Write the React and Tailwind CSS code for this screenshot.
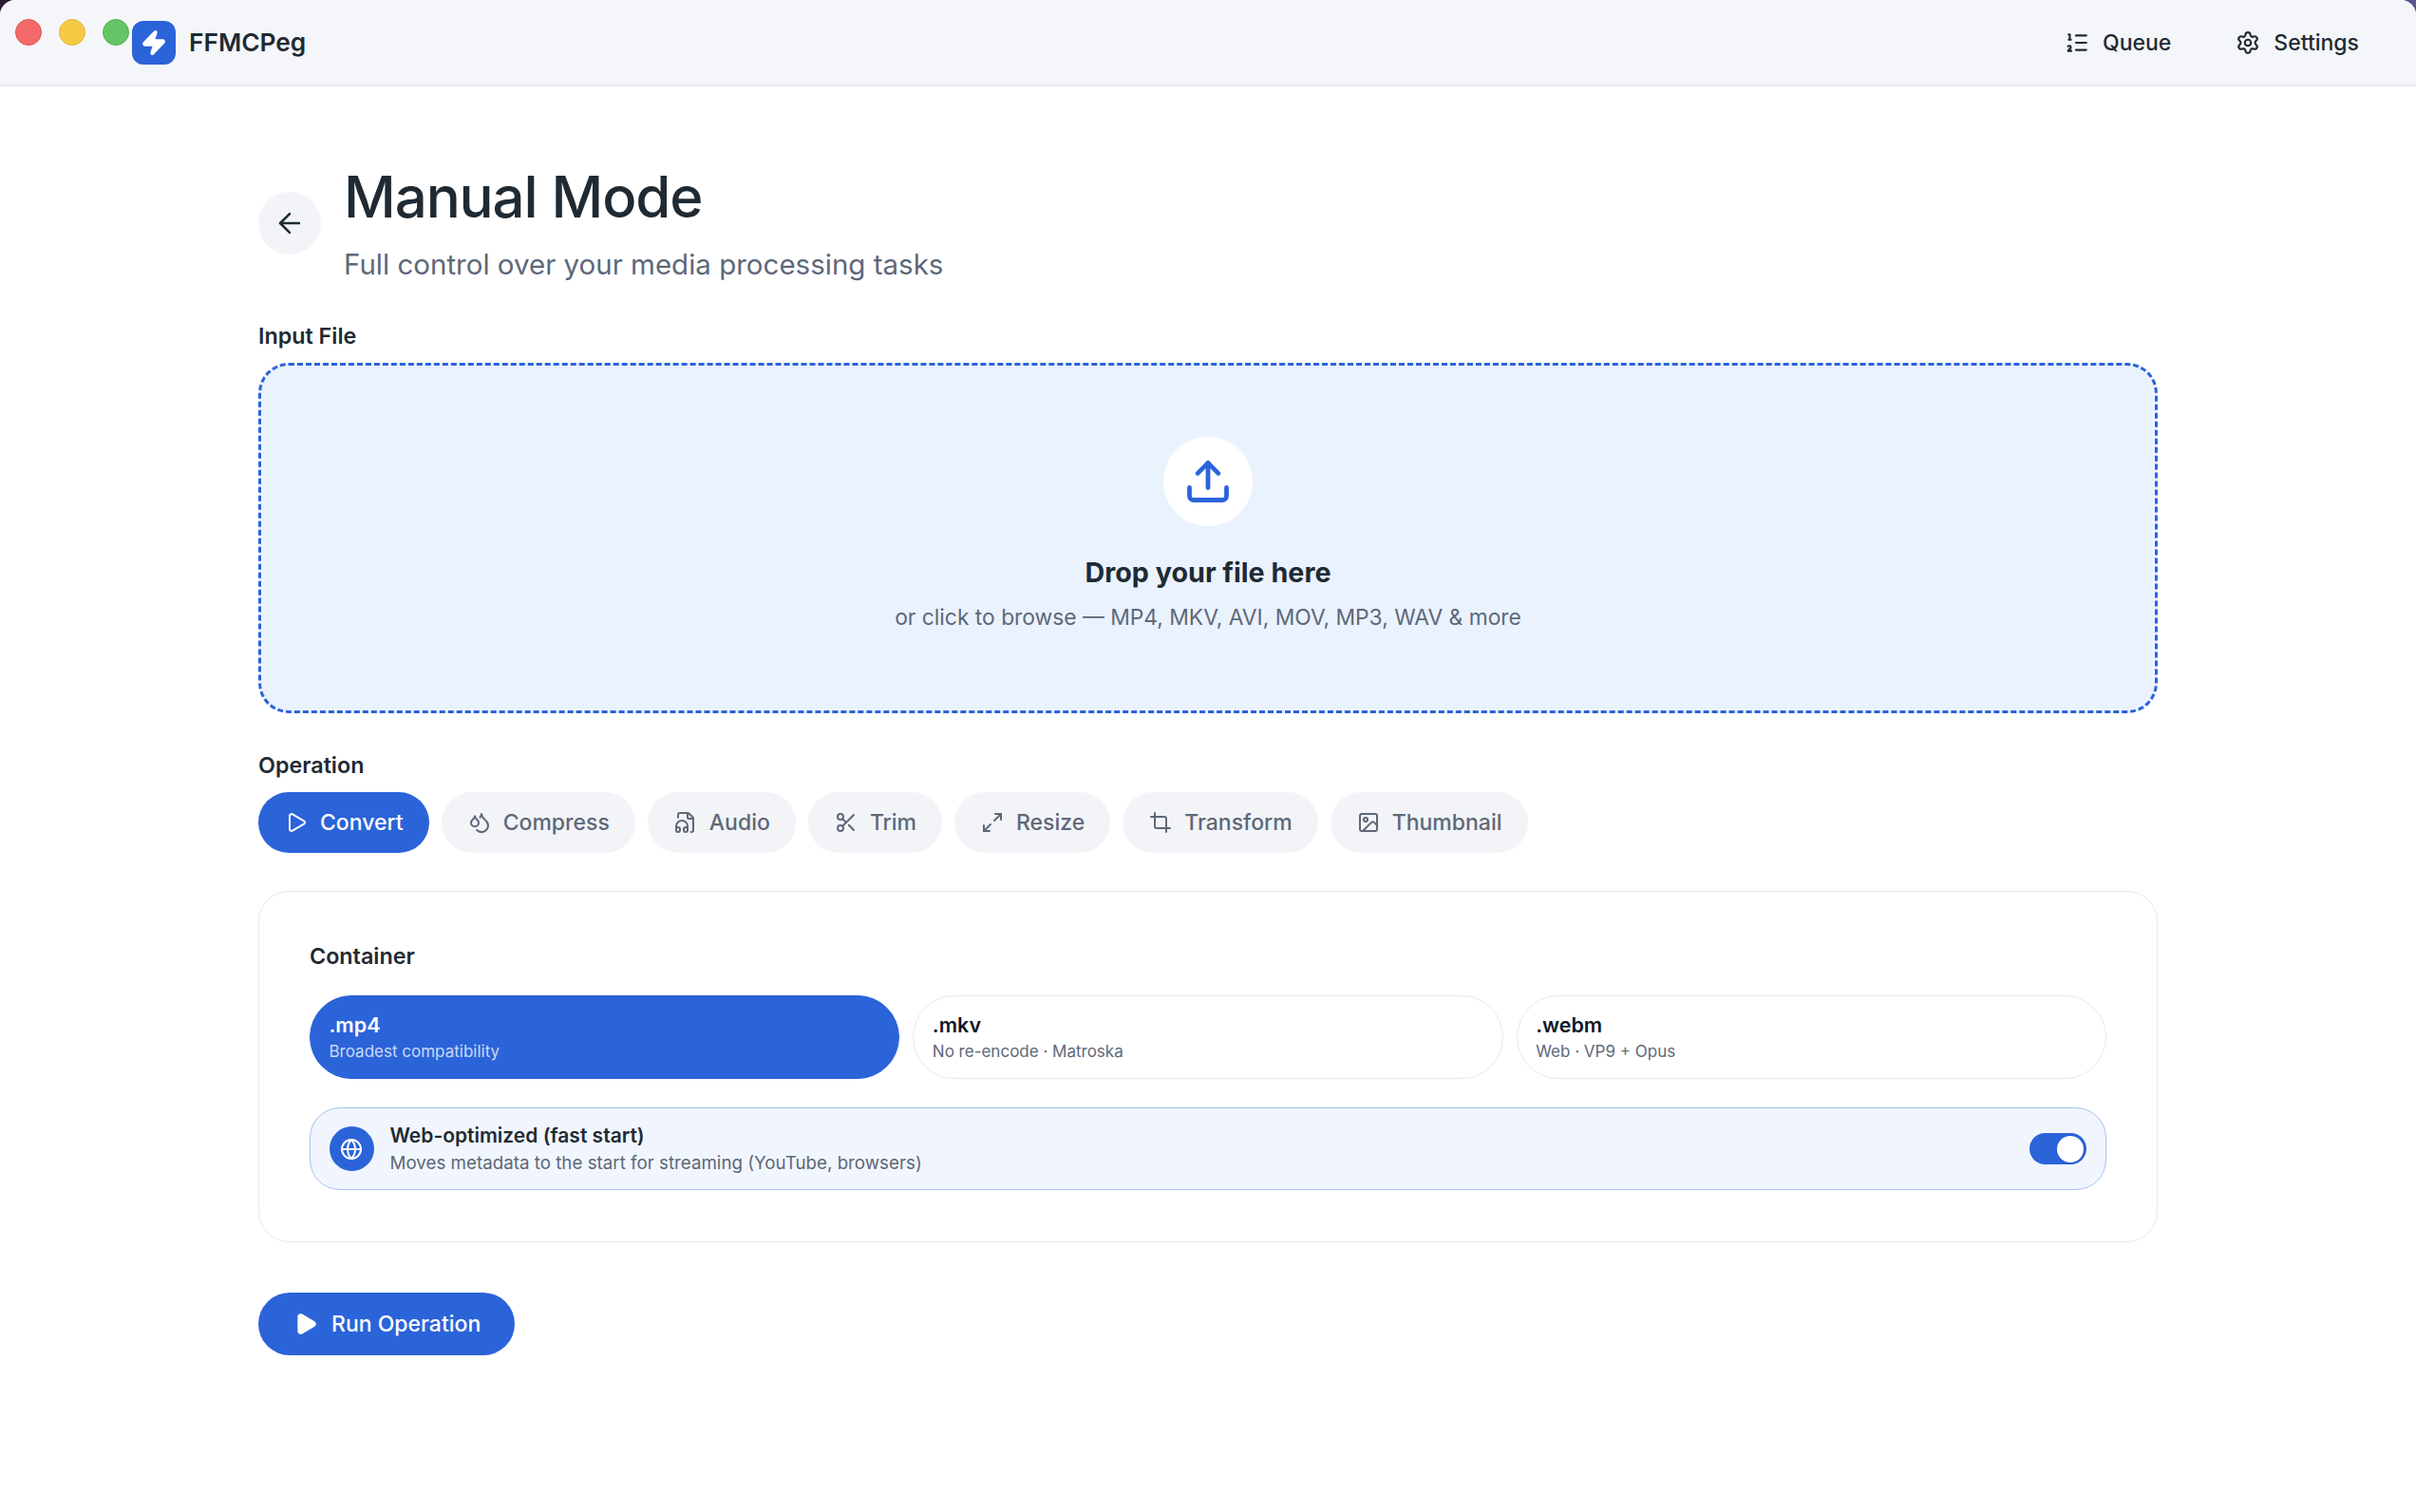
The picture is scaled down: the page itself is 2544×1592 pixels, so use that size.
import React from 'react';
import { ArrowLeft, Crop, Droplets, FileAudio, Globe, Image, ListOrdered, Maximize2, Play, Scissors, Settings, Upload, Zap } from 'lucide-react';

const operations = [
  { label: 'Convert', icon: Play, active: true },
  { label: 'Compress', icon: Droplets },
  { label: 'Audio', icon: FileAudio },
  { label: 'Trim', icon: Scissors },
  { label: 'Resize', icon: Maximize2 },
  { label: 'Transform', icon: Crop },
  { label: 'Thumbnail', icon: Image },
];

const containers = [
  { ext: '.mp4', note: 'Broadest compatibility', active: true },
  { ext: '.mkv', note: 'No re-encode · Matroska' },
  { ext: '.webm', note: 'Web · VP9 + Opus' },
];

const TopBar = () => {
  return (
    <header className="flex h-[91px] items-center justify-between border-b-2 border-[#e7e9ee] bg-[#f4f6fa] pl-[139px] pr-[60px]">
      <div className="flex items-center gap-[14px]">
        <div className="flex h-[46px] w-[46px] items-center justify-center rounded-[12px] bg-[#2b63d9]">
          <Zap size={28} strokeWidth={2.4} className="fill-white text-white" />
        </div>
        <span className="text-[26.3px] font-semibold text-[#1f2a33]">FFMCPeg</span>
      </div>
      <nav className="flex items-center gap-[68px] text-[23px] font-medium text-[#1f2a33]">
        <div className="flex items-center gap-[14px]">
          <ListOrdered size={26} strokeWidth={2} />
          <span className="pt-[2px]">Queue</span>
        </div>
        <div className="flex items-center gap-[14px]">
          <Settings size={26} strokeWidth={2} />
          <span className="pt-[2px]">Settings</span>
        </div>
      </nav>
    </header>
  );
};

const TrafficLights = () => {
  return (
    <div className="absolute left-[16px] top-[20px] flex gap-[18px]">
      <div className="h-[28px] w-[28px] rounded-full border border-[#e5504f] bg-[#f46a6a]"></div>
      <div className="h-[28px] w-[28px] rounded-full border border-[#e5b53a] bg-[#f6ca45]"></div>
      <div className="h-[28px] w-[28px] rounded-full border border-[#55b055] bg-[#65c466]"></div>
    </div>
  );
};

function App() {
  return (
    <div className="h-[1592px] w-[2544px] bg-gradient-to-r from-[#2a1c2e] to-[#5b5689] font-['Inter',sans-serif]">
      <div className="relative h-full w-full overflow-hidden rounded-t-[16px] bg-white">
        <TopBar />
        <TrafficLights />

        <main className="mx-auto w-[2000px] pt-[78px]">
          {/* Title */}
          <div className="flex items-start gap-[24px]">
            <button className="mt-[33px] flex h-[66px] w-[66px] items-center justify-center rounded-full bg-[#f2f4f8] text-[#1f2a33]">
              <ArrowLeft size={34} strokeWidth={1.8} />
            </button>
            <div>
              <h1 className="text-[60px] font-medium leading-[76px] tracking-[-1.1px] text-[#1f2a33]">Manual Mode</h1>
              <p className="mt-[13px] text-[29.5px] leading-[40px] text-[#5d6878]">Full control over your media processing tasks</p>
            </div>
          </div>

          {/* Input */}
          <div className="mt-[40px] text-[23.3px] font-semibold leading-[32px] text-[#1f2a33]">Input File</div>
          <div className="mt-[12px] flex h-[369px] flex-col items-center rounded-[32px] border-[3px] border-dashed border-[#2b63d9] bg-[#eaf2fe] pt-[75px]">
            <div className="flex h-[94px] w-[94px] items-center justify-center rounded-full bg-white">
              <Upload size={52} strokeWidth={2.2} className="text-[#2b63d9]" />
            </div>
            <div className="mt-[29px] text-[28.7px] font-bold leading-[40px] text-[#1f2a33]">Drop your file here</div>
            <div className="mt-[10px] text-[22.8px] leading-[34px] text-[#5d6878]">or click to browse — MP4, MKV, AVI, MOV, MP3, WAV &amp; more</div>
          </div>

          {/* Operation */}
          <div className="mt-[39px] text-[23.3px] font-semibold leading-[32px] text-[#1f2a33]">Operation</div>
          <div className="mt-[12px] flex gap-[13px]">
            {operations.map((op) => (
              <button
                key={op.label}
                className={`flex h-[64px] items-center gap-[13px] rounded-full pl-[28px] pr-[27px] text-[23px] font-medium ${op.active ? 'bg-[#2b63d9] text-white' : 'bg-[#f2f4f8] text-[#5d6878]'}`}
              >
                <op.icon size={24} strokeWidth={2} />
                {op.label}
              </button>
            ))}
          </div>

          {/* Options card */}
          <section className="mt-[40px] h-[370px] rounded-[32px] border-[1.5px] border-[#e7e9ee] px-[53px] pt-[52px]">
            <div className="text-[23.3px] font-semibold leading-[32px] text-[#1f2a33]">Container</div>
            <div className="mt-[25px] grid grid-cols-3 gap-[14px]">
              {containers.map((c) => (
                <div
                  key={c.ext}
                  className={`flex h-[88px] flex-col justify-center rounded-full border-[1.5px] px-[19.5px] ${c.active ? 'border-[#2b63d9] bg-[#2b63d9] text-white' : 'border-[#e7e9ee] text-[#111827]'}`}
                >
                  <span className="text-[21.5px] font-semibold leading-[30px]">{c.ext}</span>
                  <span className={`text-[17px] leading-[26px] ${c.active ? 'text-[#c9d9f6]' : 'text-[#5d6878]'}`}>{c.note}</span>
                </div>
              ))}
            </div>
            <div className="mt-[30px] flex h-[87px] items-center rounded-[32px] border-[1.5px] border-[#a3c0f0] bg-[#f1f6fe] pl-[19.5px] pr-[20.5px]">
              <div className="flex h-[47px] w-[47px] items-center justify-center rounded-full bg-[#2b63d9]">
                <Globe size={24} strokeWidth={2} className="text-white" />
              </div>
              <div className="ml-[17px] flex-1">
                <div className="text-[21px] font-semibold leading-[30px] text-[#1f2a33]">Web-optimized (fast start)</div>
                <div className="text-[18.75px] leading-[28px] text-[#5d6878]">Moves metadata to the start for streaming (YouTube, browsers)</div>
              </div>
              <div className="flex h-[33px] w-[60px] items-center justify-end rounded-full bg-[#2b63d9] pr-[3px]">
                <div className="h-[28px] w-[28px] rounded-full bg-white shadow-sm"></div>
              </div>
            </div>
          </section>

          {/* Run */}
          <button className="mt-[53px] flex h-[66px] w-[270px] items-center gap-[14px] rounded-full bg-[#2b63d9] pl-[37px] text-[23px] font-medium text-white">
            <Play size={26} strokeWidth={2} className="fill-white" />
            Run Operation
          </button>
        </main>
      </div>
    </div>
  );
}

export default App;
